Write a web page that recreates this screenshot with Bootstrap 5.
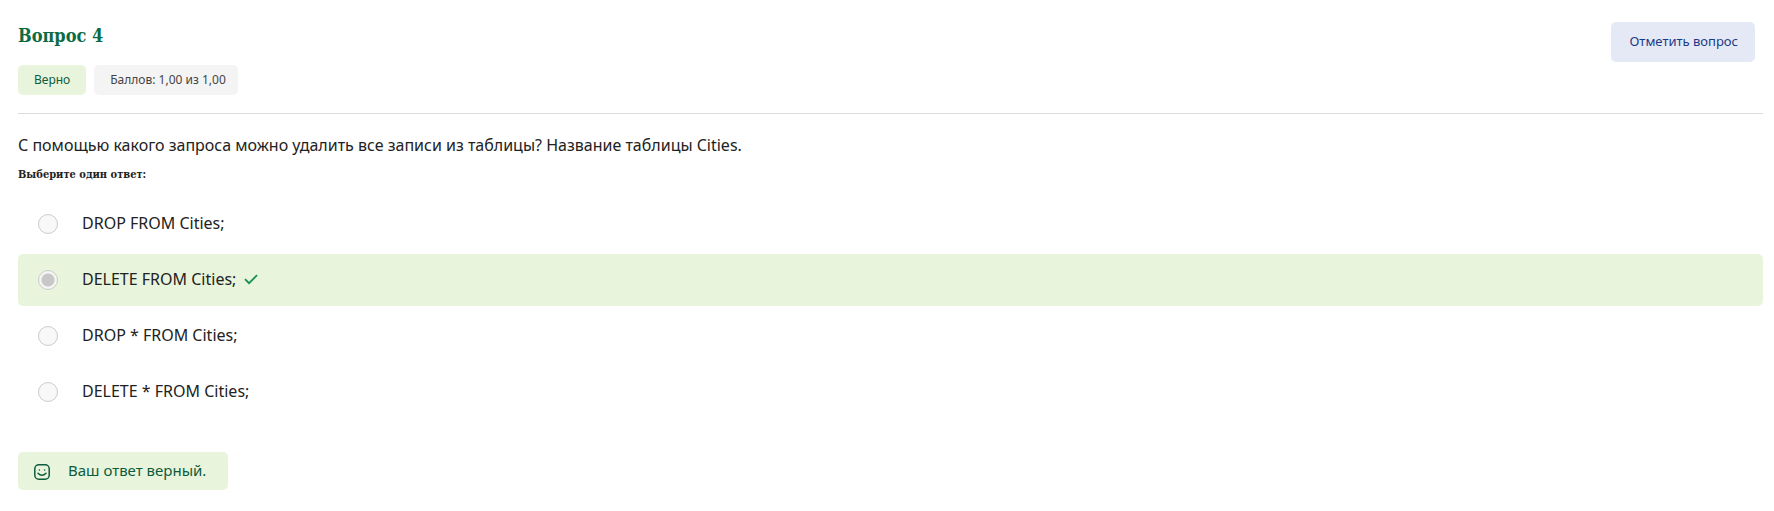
<!DOCTYPE html>
<html lang="ru">
<head>
<meta charset="utf-8">
<meta name="viewport" content="width=device-width, initial-scale=1">
<title>Вопрос 4</title>
<link href="https://cdn.jsdelivr.net/npm/bootstrap@5.3.0/dist/css/bootstrap.min.css" rel="stylesheet">
<style>
  body { font-family: "Noto Sans", "Open Sans", sans-serif; color: #222; background: #fff; }
  .question { padding: 22px 11px 20px 18px; }
  .question-head { border-bottom: 1px solid #dadfdc; padding-bottom: 18px; margin-bottom: 18px; }
  .question-title { font: bold 18px/28px "DejaVu Serif Condensed", "DejaVu Serif", serif; color: #0c6b45; margin-bottom: 15px; }
  .tag { font-size: 12px; line-height: 18px; padding: 6px 16px; border-radius: 5px; }
  .tag-ok { background: #e9f4dc; color: #0c5c3c; }
  .tag-grade { background: #f4f4f4; color: #444; padding-right: 12px; }
  .btn-flag { --bs-btn-bg: #e5e9f5; --bs-btn-color: #1b3a86; --bs-btn-hover-bg: #d8def0; --bs-btn-hover-color: #1b3a86; --bs-btn-border-width: 0; font-size: 13px; line-height: 20px; padding: 9px 17px 11px 18px; border-radius: 5px; margin-right: 8px; }
  .question-text { font-size: 16px; line-height: 26px; margin-bottom: 8px; }
  .prompt { font: bold 11px/18px "DejaVu Serif Condensed", "DejaVu Serif", serif; margin-bottom: 14px; }
  .answer { height: 52px; padding: 0 20px; border-radius: 5px; font-size: 16px; }
  .answer.correct { background: #e9f4dc; }
  .answer .form-check-input { width: 20px; height: 20px; margin: 0 24px 0 0; background-color: #f8f8f8; border: 1px solid #ccc; opacity: 1; }
  .answer .form-check-input:checked { background: radial-gradient(circle, #c8c8c8 6px, #f4f6f1 7px); }
  .answer .form-check-label { opacity: 1 !important; padding-bottom: 2px; }
  .answer-mark { margin: 0 0 2px 8px; }
  .feedback { gap: 18px; padding: 6px 22px 8px 16px; border-radius: 5px; background: #e9f4dc; color: #0c5c3c; font-size: 15px; line-height: 24px; margin-top: 34px; }
</style>
</head>
<body>
<main class="question">
  <header class="question-head d-flex justify-content-between align-items-start">
    <div>
      <h1 class="question-title">Вопрос 4</h1>
      <div class="d-flex gap-2">
        <div class="tag tag-ok">Верно</div>
        <div class="tag tag-grade">Баллов: 1,00 из 1,00</div>
      </div>
    </div>
    <button type="button" class="btn btn-flag">Отметить вопрос</button>
  </header>
  <p class="question-text">С помощью какого запроса можно удалить все записи из таблицы? Название таблицы Cities.</p>
  <fieldset>
    <legend class="prompt">Выберите один ответ:</legend>
    <div class="d-flex flex-column gap-1">
      <div class="answer d-flex align-items-center">
        <input class="form-check-input" type="radio" name="answer" id="a1" disabled>
        <label class="form-check-label" for="a1">DROP FROM Cities;</label>
      </div>
      <div class="answer correct d-flex align-items-center">
        <input class="form-check-input" type="radio" name="answer" id="a2" checked disabled>
        <label class="form-check-label" for="a2">DELETE FROM Cities;</label>
        <svg class="answer-mark" width="14" height="11" viewBox="0 0 14 11" fill="none" stroke="#159050" stroke-width="1.8" role="img" aria-label="Верно"><path d="M1 5.2 5 9.2 13 1.2"/></svg>
      </div>
      <div class="answer d-flex align-items-center">
        <input class="form-check-input" type="radio" name="answer" id="a3" disabled>
        <label class="form-check-label" for="a3">DROP * FROM Cities;</label>
      </div>
      <div class="answer d-flex align-items-center">
        <input class="form-check-input" type="radio" name="answer" id="a4" disabled>
        <label class="form-check-label" for="a4">DELETE * FROM Cities;</label>
      </div>
    </div>
  </fieldset>
  <div class="feedback d-inline-flex align-items-center">
    <svg class="mt-1" width="16" height="16" viewBox="0 0 16 16" fill="none" stroke="#0c5c3c" stroke-width="1.5" stroke-linecap="round" aria-hidden="true"><rect x=".8" y=".8" width="14.4" height="14.4" rx="4"/><path d="M4 9.3Q8 13.3 12 9.3"/><path d="M5.4 5.9v.2M10.6 5.9v.2"/></svg>
    <span>Ваш ответ верный.</span>
  </div>
</main>
<script src="https://cdn.jsdelivr.net/npm/bootstrap@5.3.0/dist/js/bootstrap.bundle.min.js"></script>
</body>
</html>
